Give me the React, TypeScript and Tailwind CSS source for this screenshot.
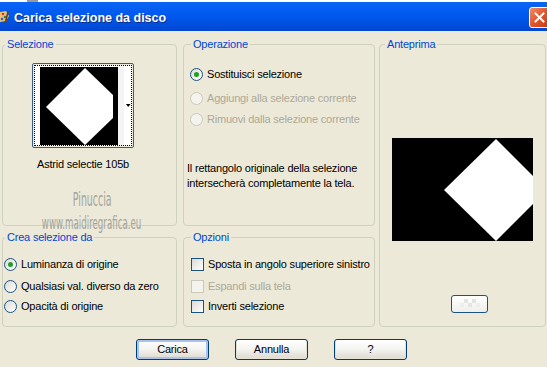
import type { ReactNode } from 'react';

function Radio({ checked, disabled }: { checked?: boolean; disabled?: boolean }) {
  return (
    <span
      className={`flex h-[13px] w-[13px] shrink-0 items-center justify-center rounded-full border ${
        disabled ? 'border-[#CAC8BB] bg-[#F4F3EE]' : 'border-[#1C5180] bg-linear-to-br from-[#DCDBD5] to-white'
      }`}
    >
      {checked && <span className="h-[5px] w-[5px] rounded-full bg-[#21A121]" />}
    </span>
  );
}

function Check({ disabled }: { disabled?: boolean }) {
  return (
    <span
      className={`block h-[13px] w-[13px] shrink-0 border ${
        disabled ? 'border-[#CAC8BB] bg-[#F4F3EE]' : 'border-[#1C5180] bg-linear-to-br from-[#DCDBD5] to-white'
      }`}
    />
  );
}

function Group({ title, offset, className, children }: { title: string; offset: string; className: string; children?: ReactNode }) {
  return (
    <fieldset className={`min-w-0 rounded-[4px] border border-[#D0D0BF] ${className}`}>
      <legend className={`${offset} px-[2px] text-[11px] leading-[13px] text-[#0046D5]`}>{title}</legend>
      {children}
    </fieldset>
  );
}

function Row({ children, disabled, className }: { children: ReactNode; disabled?: boolean; className: string }) {
  return (
    <div className={`flex h-[16px] items-center gap-[4px] whitespace-nowrap ${disabled ? 'text-[#ACA899]' : 'text-black'} ${className}`}>
      {children}
    </div>
  );
}

function Button({ label, primary }: { label: string; primary?: boolean }) {
  return (
    <button
      className={`h-[21px] w-[73px] rounded-[3px] border border-[#003C74] bg-linear-to-b from-white via-[#F3F3EF] to-[#DCD8CD] text-[11px] text-black ${
        primary ? 'shadow-[inset_0_0_0_2px_#A8C4EE]' : 'shadow-[inset_0_-1px_0_1px_#E3E0D6]'
      }`}
    >
      {label}
    </button>
  );
}

export default function App() {
  return (
    <div className="relative h-[367px] w-[547px] overflow-hidden bg-[#ECE9D8] font-['Liberation_Sans',Arial,sans-serif] text-[11px] leading-[13px] tracking-[-0.2px]">
      <div className="h-[2px] bg-white">
        <div className="ml-[27px] h-[2px] w-[11px] bg-[#9A9A9A]" />
      </div>

      {/* title bar */}
      <div className="flex h-[29px] items-center bg-linear-to-b from-[#0A64F5] via-[#0058EE] to-[#0047D0]">
        <svg width="9" height="15" viewBox="0 0 9 15" className="mt-[1px] shrink-0">
          <path d="M0 2 L6 1 L9 6 L6 11 L0 12 Z" fill="#E9C27A" />
          <circle cx="3" cy="4" r="1.3" fill="#D93A2B" />
          <circle cx="5" cy="7" r="1.3" fill="#2C8A3A" />
          <circle cx="2" cy="9" r="1.3" fill="#2F5FD0" />
          <path d="M5 14 L8 2" stroke="#6A3B16" strokeWidth="1.5" />
        </svg>
        <span className="ml-[5px] mt-[3px] text-[12.5px] font-bold tracking-[0px] text-white [text-shadow:1px_1px_0_#0A2E8C]">
          Carica selezione da disco
        </span>
        <div className="-mr-[3px] ml-auto mt-[1px] flex h-[21px] w-[21px] items-center justify-center rounded-[3px] border border-white bg-linear-to-br from-[#F08A64] via-[#E0542B] to-[#C23B14]">
          <svg width="11" height="11" viewBox="0 0 11 11">
            <path d="M1.5 1.5 L9.5 9.5 M9.5 1.5 L1.5 9.5" stroke="white" strokeWidth="2" strokeLinecap="square" />
          </svg>
        </div>
      </div>

      {/* groups */}
      <div className="flex pl-[2px] pt-[7px]">
        <div className="flex w-[175px] flex-col gap-[5px]">
          <Group title="Selezione" offset="ml-[2px]" className="h-[188px]">
            <div className="ml-[29px] mt-[12px] flex w-[102px] flex-col items-center">
              <div className="h-[85px] w-[102px] rounded-[2px] border border-[#3A5E8C] p-[1px]">
                <div className="flex h-full items-center border border-dotted border-black bg-white">
                  <svg width="78" height="78" viewBox="0 0 78 78" className="ml-[5px] shrink-0">
                    <rect width="78" height="78" fill="black" />
                    <polygon points="45,1 73,28 73,51 45,78 6,40" fill="white" />
                  </svg>
                  <div className="h-full w-[6px] bg-[#F4F4F4]" />
                  <svg width="7" height="5" viewBox="0 0 7 5" className="ml-[1px]">
                    <polygon points="1,1 6,1 3.5,4" fill="black" />
                  </svg>
                </div>
              </div>
              <div className="mt-[10px] whitespace-nowrap text-black">Astrid selectie 105b</div>
            </div>
            <div className="mt-[17px] flex flex-col items-center pl-[5px] font-['DejaVu_Sans',sans-serif] tracking-[0px] text-[#A3A39B]">
              <span className="scale-x-[0.47] text-[20px] leading-[22px] whitespace-nowrap">Pinuccia</span>
              <span className="mt-[6px] scale-x-[0.51] text-[17px] leading-[14px] whitespace-nowrap">www.maidiregrafica.eu</span>
            </div>
          </Group>

          <Group title="Crea selezione da" offset="ml-[2px]" className="h-[96px]">
            <div className="flex flex-col pl-[1px]">
              <Row className="mt-[12px]">
                <Radio checked />
                <span>Luminanza di origine</span>
              </Row>
              <Row className="mt-[6px]">
                <Radio />
                <span>Qualsiasi val. diverso da zero</span>
              </Row>
              <Row className="mt-[4px]">
                <Radio />
                <span>Opacità di origine</span>
              </Row>
            </div>
          </Group>
        </div>

        <div className="ml-[6px] flex w-[192px] flex-col gap-[5px]">
          <Group title="Operazione" offset="ml-[7px]" className="h-[188px]">
            <div className="flex flex-col pl-[6px]">
              <Row className="mt-[15px]">
                <Radio checked />
                <span>Sostituisci selezione</span>
              </Row>
              <Row disabled className="mt-[8px]">
                <Radio disabled />
                <span>Aggiungi alla selezione corrente</span>
              </Row>
              <Row disabled className="mt-[5px]">
                <Radio disabled />
                <span>Rimuovi dalla selezione corrente</span>
              </Row>
              <p className="-ml-[3px] mt-[34px] whitespace-nowrap leading-[15px] text-black">
                Il rettangolo originale della selezione
                <br />
                intersecherà completamente la tela.
              </p>
            </div>
          </Group>

          <Group title="Opzioni" offset="ml-[7px]" className="h-[96px]">
            <div className="flex flex-col pl-[7px]">
              <Row className="mt-[12px]">
                <Check />
                <span>Sposta in angolo superiore sinistro</span>
              </Row>
              <Row disabled className="mt-[6px]">
                <Check disabled />
                <span>Espandi sulla tela</span>
              </Row>
              <Row className="mt-[4px]">
                <Check />
                <span>Inverti selezione</span>
              </Row>
            </div>
          </Group>
        </div>

        <Group title="Anteprima" offset="ml-[5px]" className="ml-[4px] h-[289px] w-[167px]">
          <div className="flex flex-col items-center">
            <svg width="141" height="103" viewBox="0 0 141 103" className="mt-[87px]">
              <rect width="141" height="103" fill="black" />
              <polygon points="104,1 141,38 141,66 104,103 52,52" fill="white" />
            </svg>
            <div className="ml-[14px] mt-[54px] flex h-[18px] w-[37px] items-center justify-center rounded-[3px] border border-[#1C5180] bg-linear-to-b from-white to-[#EEEEEA]">
              <svg width="20" height="10" viewBox="0 0 20 10">
                <rect x="4" y="0" width="4" height="4" fill="#E4E4E0" />
                <rect x="12" y="0" width="4" height="4" fill="#E4E4E0" />
                <rect x="8" y="4" width="4" height="4" fill="#E4E4E0" />
                <rect x="0" y="4" width="4" height="4" fill="#EDEDEA" />
                <rect x="16" y="4" width="4" height="4" fill="#EDEDEA" />
              </svg>
            </div>
          </div>
        </Group>
      </div>

      {/* buttons */}
      <div className="mt-[12px] flex gap-[26px] pl-[136px]">
        <Button label="Carica" primary />
        <Button label="Annulla" />
        <Button label="?" />
      </div>
    </div>
  );
}
